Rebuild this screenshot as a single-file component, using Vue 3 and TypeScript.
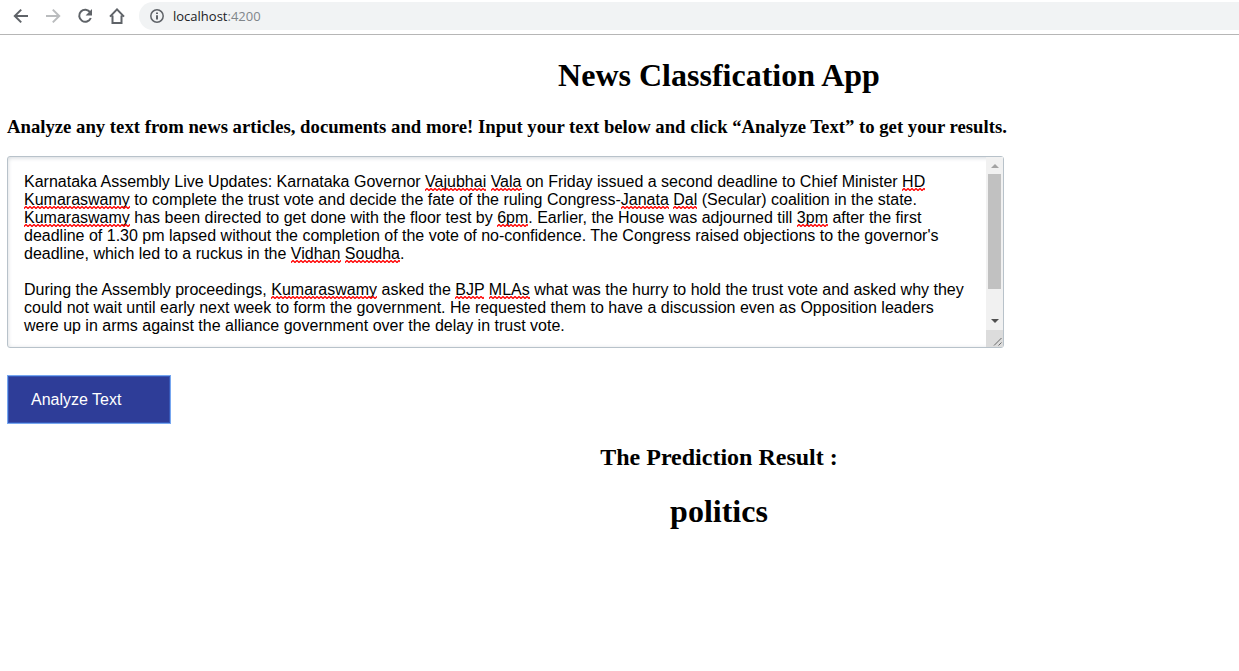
<script setup lang="ts">
import { nextTick, onBeforeUnmount, onMounted, ref, computed, watch } from 'vue'

interface Segment {
  text: string
  misspelled: boolean
}

interface Mark {
  left: string
  top: string
  width: string
}

const article = ref(
  "Karnataka Assembly Live Updates: Karnataka Governor Vajubhai Vala on Friday issued a second deadline to Chief Minister HD Kumaraswamy to complete the trust vote and decide the fate of the ruling Congress-Janata Dal (Secular) coalition in the state. Kumaraswamy has been directed to get done with the floor test by 6pm. Earlier, the House was adjourned till 3pm after the first deadline of 1.30 pm lapsed without the completion of the vote of no-confidence. The Congress raised objections to the governor's deadline, which led to a ruckus in the Vidhan Soudha.\n\nDuring the Assembly proceedings, Kumaraswamy asked the BJP MLAs what was the hurry to hold the trust vote and asked why they could not wait until early next week to form the government. He requested them to have a discussion even as Opposition leaders were up in arms against the alliance government over the delay in trust vote."
)
const result = ref('politics')

const unknownWords = /\b(Vajubhai|Vala|HD|Kumaraswamy|Janata|Dal|6pm|3pm|Vidhan|Soudha|BJP|MLAs)\b/

const segments = computed<Segment[]>(() =>
  article.value.split(unknownWords).map((text, i) => ({ text, misspelled: i % 2 === 1 }))
)

const mirror = ref<HTMLElement | null>(null)
const marks = ref<Mark[]>([])

// The hidden mirror wraps like the text box, so its word boxes place the spelling marks.
function placeMarks(): void {
  const host = mirror.value
  if (!host) return
  const origin = host.getBoundingClientRect()
  marks.value = Array.from(host.querySelectorAll('.misspelled')).map((word) => {
    const box = word.getBoundingClientRect()
    return {
      left: `${Math.round(box.left - origin.left)}px`,
      top: `${Math.round(box.bottom - origin.top)}px`,
      width: `${Math.round(box.width)}px`
    }
  })
}

onMounted(() => {
  placeMarks()
  window.addEventListener('resize', placeMarks)
})
onBeforeUnmount(() => window.removeEventListener('resize', placeMarks))
watch(article, () => nextTick(placeMarks))

function analyze(): void {
  result.value = 'politics'
}
</script>

<template>
  <div class="window">
    <header class="toolbar">
      <button class="nav" type="button" aria-label="Back">
        <svg viewBox="0 0 16 16"><path d="M15 8H2M8.2 1.6 1.8 8l6.4 6.4" /></svg>
      </button>
      <button class="nav disabled" type="button" aria-label="Forward" disabled>
        <svg viewBox="0 0 16 16"><path d="M1 8h13M7.8 1.6 14.2 8l-6.4 6.4" /></svg>
      </button>
      <button class="nav" type="button" aria-label="Reload">
        <svg viewBox="0 0 16 16">
          <path d="M13.2 4.4A6 6 0 1 0 13.8 10" />
          <path class="solid" d="M15 1v6.4H8.6z" />
        </svg>
      </button>
      <button class="nav" type="button" aria-label="Home">
        <svg viewBox="0 0 16 16"><path d="M1 8.6 8 1.4l7 7.2M3.5 7.5V15h9V7.5" /></svg>
      </button>
      <div class="address">
        <svg class="info" viewBox="0 0 14 14">
          <circle cx="7" cy="7" r="6.2" />
          <path d="M7 6.2v4.2M7 3.4v1.6" />
        </svg>
        <span class="url">localhost<span class="port">:4200</span></span>
      </div>
    </header>

    <main class="page">
      <h1 class="centered title">News Classfication App</h1>
      <h3 class="lead">
        <label for="article">Analyze any text from news articles, documents and more! Input your text below and click “Analyze Text” to get your results.</label>
      </h3>

      <div class="box">
        <div class="editor">
          <div ref="mirror" class="mirror" aria-hidden="true"><span
            v-for="(segment, i) in segments"
            :key="i"
            :class="{ misspelled: segment.misspelled }"
          >{{ segment.text }}</span></div>
          <textarea id="article" v-model="article" class="input" spellcheck="false"></textarea>
          <svg
            v-for="(mark, i) in marks"
            :key="i"
            class="mark"
            :style="mark"
            aria-hidden="true"
          >
            <defs>
              <pattern :id="`wave-${i}`" width="4" height="3" patternUnits="userSpaceOnUse">
                <path d="M-1 1.5 0 2.5 2 .5l2 2 1-1" />
              </pattern>
            </defs>
            <rect width="100%" height="3" :fill="`url(#wave-${i})`" />
          </svg>
        </div>
        <div class="scrollbar" aria-hidden="true">
          <svg class="arrow up" viewBox="0 0 8 4"><path d="M0 4 4 0l4 4z" /></svg>
          <div class="track"><div class="thumb"></div></div>
          <svg class="arrow" viewBox="0 0 8 4"><path d="M0 0h8L4 4z" /></svg>
          <svg class="grip" viewBox="0 0 17 17"><path d="M8 15.5 15.5 8M12.5 15.5l3-3" /></svg>
        </div>
      </div>

      <button class="analyze" type="button" @click="analyze">Analyze Text</button>

      <h2 class="centered subtitle">The Prediction Result :</h2>
      <h1 class="centered result">{{ result }}</h1>
    </main>
  </div>
</template>

<style>
body {
  margin: 0;
  background: #fff;
}
</style>

<style scoped>
.window {
  color: #000;
  font-family: "Liberation Serif", "Times New Roman", serif;
}

.toolbar {
  display: flex;
  align-items: center;
  gap: 16px;
  box-sizing: border-box;
  height: 35px;
  padding: 0 0 2px 13px;
  border-bottom: 1px solid #b6b6b6;
}

.nav {
  width: 16px;
  height: 16px;
  padding: 0;
  border: 0;
  background: none;
  color: #5f6368;
}

.nav svg {
  display: block;
  width: 16px;
  height: 16px;
  fill: none;
  stroke: currentColor;
  stroke-width: 2;
}

.nav .solid {
  fill: currentColor;
  stroke: none;
}

.nav.disabled {
  color: #babcbe;
}

.address {
  display: flex;
  flex: 1;
  align-items: center;
  gap: 9px;
  height: 28px;
  margin-left: -2px;
  padding-left: 11px;
  border-radius: 14px 0 0 14px;
  background: #f1f3f4;
}

.info {
  width: 14px;
  height: 14px;
  fill: none;
  stroke: #5f6368;
  stroke-width: 2;
}

.info circle {
  stroke-width: 1.5;
}

.url {
  color: #202124;
  font: 13px/18px "Open Sans", "Noto Sans", sans-serif;
}

.port {
  color: #80868b;
}

.page {
  padding: 0 7px;
}

.centered {
  padding-left: 199px;
  margin: 0;
  text-align: center;
}

.title,
.result {
  font-size: 32px;
  line-height: 36px;
}

.title {
  margin-top: 22px;
}

.lead {
  margin: 23px 0 18px;
  line-height: 22px;
}

.box {
  display: flex;
  box-sizing: border-box;
  width: 997px;
  max-width: 100%;
  border: 1px solid #b8c2ca;
  border-radius: 3px;
  box-shadow: inset 0 1px 4px #d4d8dc;
}

.editor {
  position: relative;
  display: grid;
  flex: 1;
  min-width: 0;
  height: 190px;
  overflow: hidden;
}

.mirror,
.input {
  grid-area: 1 / 1;
  box-sizing: border-box;
  min-width: 0;
  height: 190px;
  margin: 0;
  padding: 16px 16px 12px;
  overflow: hidden;
  border: 0;
  background: transparent;
  font: 16px/18px "Liberation Sans", Arial, sans-serif;
  white-space: pre-wrap;
  overflow-wrap: break-word;
}

.mirror {
  visibility: hidden;
}

.input {
  color: #000;
  outline: 0;
  resize: none;
}

.mark {
  position: absolute;
  height: 3px;
  margin-top: -2px;
  overflow: hidden;
  pointer-events: none;
}

.mark path {
  fill: none;
  stroke: #f00;
  stroke-width: 1.3;
}

.scrollbar {
  display: flex;
  flex-direction: column;
  align-items: center;
  width: 17px;
  background: #f1f1f1;
}

.arrow {
  width: 8px;
  height: 4px;
  margin: 6px 0 7px;
  fill: #505050;
}

.arrow.up {
  margin: 7px 0 6px;
  fill: #a3a3a3;
}

.track {
  flex: 1;
  width: 13px;
}

.thumb {
  height: 83%;
  background: #c1c1c1;
}

.grip {
  width: 17px;
  height: 17px;
  background: #dcdcdc;
  fill: none;
  stroke: #686868;
}

.analyze {
  display: block;
  box-sizing: border-box;
  width: 164px;
  height: 49px;
  margin: 27px 0 0;
  padding: 0 23px;
  border: 1px solid #77a7f0;
  background: #2e3d98;
  box-shadow: inset 0 0 0 1px #3657b8;
  color: #fff;
  font: 16px/18px "Liberation Sans", Arial, sans-serif;
  text-align: left;
}

.subtitle {
  margin-top: 19px;
  font-size: 24px;
  line-height: 28px;
}

.result {
  margin-top: 22px;
}
</style>
